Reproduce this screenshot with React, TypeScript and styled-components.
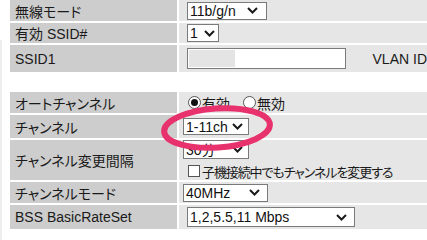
import React from "react";
import styled, { createGlobalStyle } from "styled-components";

const Global = createGlobalStyle`
  html, body { margin: 0; padding: 0; background: #ffffff; }
  body {
    font-family: "Liberation Sans", Arial, "Noto Sans CJK JP", sans-serif;
    color: #1a1a1a;
    font-feature-settings: "palt";
  }
`;

const Page = styled.div`
  position: relative;
  width: 427px;
  height: 240px;
  overflow: hidden;
  box-sizing: border-box;
  padding-left: 10px;
  background: #fff;
  &::before {
    content: "";
    position: absolute;
    left: 0;
    top: 40px;
    bottom: 0;
    width: 2px;
    background: #eeeeee;
  }
`;

const Table = styled.div<{ $mt?: number }>`
  display: flex;
  flex-direction: column;
  gap: 2px;
  margin-top: ${(p) => p.$mt ?? 0}px;
  width: 417px;
`;

const Row = styled.div<{ $h: number }>`
  display: grid;
  grid-template-columns: 167px 1fr;
  column-gap: 2px;
  height: ${(p) => p.$h}px;
`;

const Label = styled.div`
  background: #cdcdcd;
  display: flex;
  align-items: center;
  padding-left: 5px;
  font-size: 14px;
  white-space: nowrap;
`;

const Value = styled.div<{ $pad: number }>`
  background: #e6e6e6;
  display: flex;
  align-items: center;
  padding-left: ${(p) => p.$pad}px;
  font-size: 14px;
  white-space: nowrap;
  overflow: hidden;
`;

const Stack = styled.div`
  display: flex;
  flex-direction: column;
  gap: 3px;
`;

const SelectBox = styled.div<{ $w: number; $h: number; $pr: number }>`
  display: inline-flex;
  align-items: center;
  justify-content: space-between;
  box-sizing: border-box;
  width: ${(p) => p.$w}px;
  height: ${(p) => p.$h}px;
  border: 1px solid #7a7a7a;
  background: #fff;
  padding: 0 ${(p) => p.$pr}px 0 2px;
  font-size: 14px;
  color: #111;
`;

const Chevron = () => (
  <svg width="11" height="7" viewBox="0 0 11 7">
    <polyline points="1,1 5.5,5.5 10,1" fill="none" stroke="#1a1a1a" strokeWidth="2" />
  </svg>
);

const Select = ({ text, w, h = 18, pr = 6 }: { text: string; w: number; h?: number; pr?: number }) => (
  <SelectBox $w={w} $h={h} $pr={pr}>
    <span>{text}</span>
    <Chevron />
  </SelectBox>
);

const TextInput = styled.div`
  box-sizing: border-box;
  width: 181px;
  height: 21px;
  border: 1px solid #7a7a7a;
  background: #fff;
  padding: 1px;
  display: flex;
`;

const Blurred = styled.div`
  width: 46px;
  height: 100%;
  background: #e4e4e4;
  filter: blur(0.6px);
`;

const Vlan = styled.span`
  margin-left: 27px;
`;

const RadioGroup = styled.label`
  display: inline-flex;
  align-items: center;
  gap: 1px;
  margin-right: 13px;
`;

const RadioCircle = styled.span<{ $on?: boolean }>`
  box-sizing: border-box;
  width: 13px;
  height: 13px;
  border-radius: 50%;
  border: 1px solid #555;
  background: #fff;
  display: inline-flex;
  align-items: center;
  justify-content: center;
  &::after {
    content: "";
    width: 7px;
    height: 7px;
    border-radius: 50%;
    background: ${(p) => (p.$on ? "#111" : "transparent")};
  }
`;

const CheckRow = styled.div`
  display: flex;
  align-items: center;
  gap: 2px;
  padding-left: 5px;
  font-size: 13px;
  letter-spacing: -1.1px;
`;

const CheckBox = styled.span`
  box-sizing: border-box;
  width: 12px;
  height: 12px;
  border: 1px solid #555;
  background: #fff;
`;

const Ring = styled.svg`
  position: absolute;
  left: 158px;
  top: 102px;
  width: 120px;
  height: 52px;
  pointer-events: none;
`;

export default function App() {
  return (
    <>
      <Global />
      <Page>
        <Table>
          <Row $h={21}>
            <Label>無線モード</Label>
            <Value $pad={8}>
              <Select text="11b/g/n" w={80} pr={8} />
            </Value>
          </Row>
          <Row $h={20}>
            <Label>有効 SSID#</Label>
            <Value $pad={8}>
              <Select text="1" w={32} pr={3} />
            </Value>
          </Row>
          <Row $h={27}>
            <Label>SSID1</Label>
            <Value $pad={8}>
              <TextInput>
                <Blurred />
              </TextInput>
              <Vlan>VLAN ID</Vlan>
            </Value>
          </Row>
        </Table>
        <Table $mt={20}>
          <Row $h={21}>
            <Label>オートチャンネル</Label>
            <Value $pad={9}>
              <RadioGroup>
                <RadioCircle $on />
                有効
              </RadioGroup>
              <RadioGroup>
                <RadioCircle />
                無効
              </RadioGroup>
            </Value>
          </Row>
          <Row $h={23}>
            <Label>チャンネル</Label>
            <Value $pad={4}>
              <Select text="1-11ch" w={66} h={17} pr={5} />
            </Value>
          </Row>
          <Row $h={40}>
            <Label>チャンネル変更間隔</Label>
            <Value $pad={4}>
              <Stack>
                <Select text="30分" w={66} h={19} pr={5} />
                <CheckRow>
                  <CheckBox />
                  子機接続中でもチャンネルを変更する
                </CheckRow>
              </Stack>
            </Value>
          </Row>
          <Row $h={21}>
            <Label>チャンネルモード</Label>
            <Value $pad={4}>
              <Select text="40MHz" w={85} h={18} pr={7} />
            </Value>
          </Row>
          <Row $h={24}>
            <Label>BSS BasicRateSet</Label>
            <Value $pad={8}>
              <Select text="1,2,5.5,11 Mbps" w={168} h={20} pr={7} />
            </Value>
          </Row>
        </Table>
        <Ring viewBox="0 0 120 52">
          <ellipse
            cx="59"
            cy="26"
            rx="53"
            ry="19.5"
            fill="none"
            stroke="#e8326d"
            strokeWidth="6"
            transform="rotate(-4 59 26)"
          />
        </Ring>
      </Page>
    </>
  );
}
